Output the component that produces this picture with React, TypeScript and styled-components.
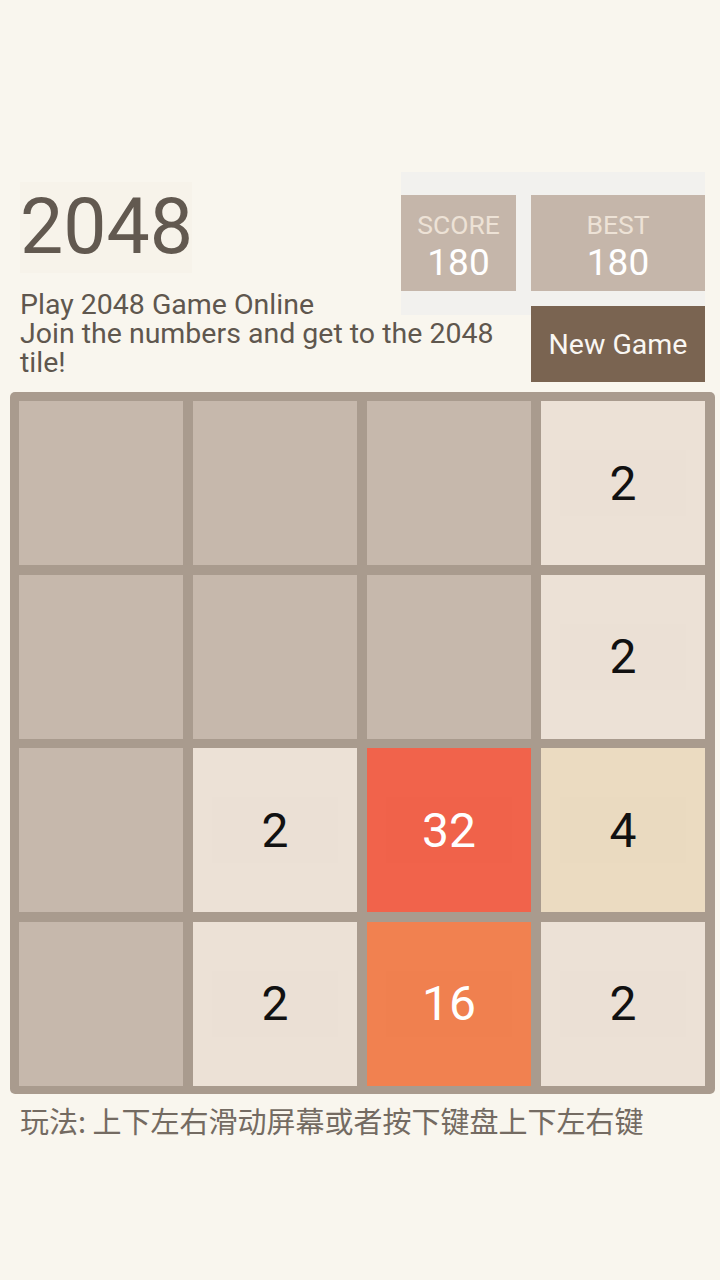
import styled, { createGlobalStyle } from "styled-components"

const GlobalStyle = createGlobalStyle`
  html, body {
    margin: 0;
    padding: 0;
    background: #f9f6ee;
  }
  body {
    font-family: Roboto, "Noto Sans CJK SC", sans-serif;
  }
`

const Page = styled.div`
  min-height: 1280px;
  background: #f9f6ee;
`

const Header = styled.div`
  padding: 172px 15px 0 20px;
`

const TopRow = styled.div`
  display: flex;
  justify-content: space-between;
  align-items: flex-start;
`

const BottomRow = styled.div`
  display: flex;
  justify-content: space-between;
  align-items: flex-start;
  margin-top: -25px;
`

const Title = styled.h1`
  margin: 10px 0 0;
  width: 172px;
  height: 91px;
  line-height: 91px;
  font-size: 77px;
  font-weight: 400;
  color: #625950;
  background: #f7f3ea;
`

const Subtitle = styled.p`
  flex: 1;
  margin: 0 20px 0 0;
  font-size: 28.5px;
  line-height: 29px;
  color: #5f574e;
`

const ScoreArea = styled.div`
  display: flex;
  gap: 15px;
  width: 304px;
  padding: 23px 0 24px;
  background: #f2f1ee;
`

const ScoreBox = styled.div<{ $w: number }>`
  width: ${(p) => p.$w}px;
  height: 96px;
  padding-top: 15px;
  box-sizing: border-box;
  background: #c5b6aa;
  display: flex;
  flex-direction: column;
  align-items: center;
`

const ScoreLabel = styled.div`
  font-size: 26.5px;
  line-height: 30px;
  color: #ede2d6;
`

const ScoreValue = styled.div`
  margin-top: 3px;
  font-size: 37px;
  line-height: 40px;
  color: #ffffff;
`

const NewGame = styled.button`
  margin-top: 16px;
  flex-shrink: 0;
  width: 174px;
  height: 76px;
  border: none;
  padding: 0;
  background: #7a6451;
  color: #f9f6f2;
  font-family: Roboto, sans-serif;
  font-size: 28.5px;
  cursor: pointer;
`

const Board = styled.div`
  margin: 10px 5px 0 10px;
  padding: 9px 9px 8px;
  background: #a99b8e;
  border-radius: 5px;
  display: grid;
  grid-template-columns: repeat(4, 164px);
  grid-auto-rows: 164px;
  column-gap: 10px;
  row-gap: 9.6px;
`

const tileColors: Record<number, { bg: string; fg: string }> = {
  0: { bg: "#c6b8ac", fg: "transparent" },
  2: { bg: "#ece1d6", fg: "#111111" },
  4: { bg: "#ebdbc1", fg: "#111111" },
  16: { bg: "#f18150", fg: "#ffffff" },
  32: { bg: "#f1634b", fg: "#ffffff" },
}

const Tile = styled.div<{ $v: number }>`
  background: ${(p) => tileColors[p.$v].bg};
  color: ${(p) => tileColors[p.$v].fg};
  display: flex;
  align-items: center;
  justify-content: center;
`

const TileNumber = styled.span`
  display: flex;
  align-items: center;
  justify-content: center;
  width: 126px;
  height: 66px;
  font-size: 48px;
  background: rgba(0, 0, 0, 0.004);
`

const Footer = styled.p`
  margin: 8px 0 0 20px;
  font-size: 29px;
  line-height: 36px;
  color: #746b62;
  font-family: "Noto Sans CJK SC", Roboto, sans-serif;
`

const grid = [
  [0, 0, 0, 2],
  [0, 0, 0, 2],
  [0, 2, 32, 4],
  [0, 2, 16, 2],
]

const App = () => {
  return (
    <Page>
      <GlobalStyle />
      <Header>
        <TopRow>
          <Title>2048</Title>
          <ScoreArea>
            <ScoreBox $w={115}>
              <ScoreLabel>SCORE</ScoreLabel>
              <ScoreValue>180</ScoreValue>
            </ScoreBox>
            <ScoreBox $w={174}>
              <ScoreLabel>BEST</ScoreLabel>
              <ScoreValue>180</ScoreValue>
            </ScoreBox>
          </ScoreArea>
        </TopRow>
        <BottomRow>
          <Subtitle>
            Play 2048 Game Online
            <br />
            Join the numbers and get to the 2048 tile!
          </Subtitle>
          <NewGame>New Game</NewGame>
        </BottomRow>
      </Header>
      <Board>
        {grid.flat().map((v, i) => (
          <Tile key={i} $v={v}>
            {v > 0 && <TileNumber>{v}</TileNumber>}
          </Tile>
        ))}
      </Board>
      <Footer>玩法: 上下左右滑动屏幕或者按下键盘上下左右键</Footer>
    </Page>
  )
}

export default App
